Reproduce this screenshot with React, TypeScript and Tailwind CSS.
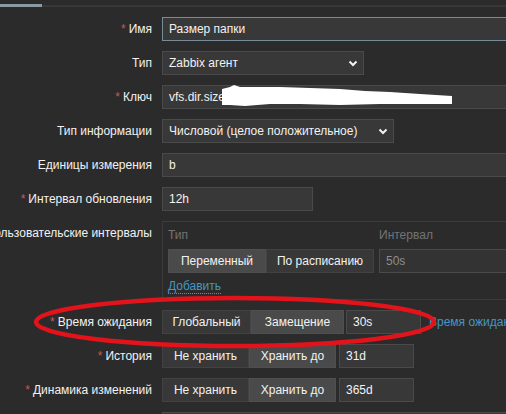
import React from "react";

const font = { fontFamily: '"Liberation Sans", Arial, sans-serif' };

function Label({ text, req }: { text: string; req?: boolean }) {
  return (
    <div className="w-[152px] shrink-0 flex justify-end h-[24px] items-center">
      <span className="whitespace-nowrap shrink-0 text-[12px] text-[#f2f2f2]">
        {req && <span className="text-[#c4585f] mr-[3px]">*</span>}
        {text}
      </span>
    </div>
  );
}

function Input({ value, w, focus, dim }: { value: string; w: string; focus?: boolean; dim?: boolean }) {
  return (
    <div
      className={`${w} h-[24px] shrink-0 border ${focus ? "border-[#768d99]" : "border-[#4a4a4a]"} ${dim ? "bg-[#333333] text-[#8e8e8e]" : "bg-[#383838] text-[#f2f2f2]"} px-[6px] flex items-center text-[12px] whitespace-nowrap`}
    >
      {value}
    </div>
  );
}

function Select({ value, w }: { value: string; w: string }) {
  return (
    <div className={`${w} h-[24px] shrink-0 border border-[#4a4a4a] bg-[#383838] text-[#f2f2f2] pl-[6px] pr-[5px] flex items-center justify-between text-[12px]`}>
      <span>{value}</span>
      <svg width="10" height="7" viewBox="0 0 10 7">
        <polyline points="1.5,1.5 5,5 8.5,1.5" fill="none" stroke="#f2f2f2" strokeWidth="2" />
      </svg>
    </div>
  );
}

function Seg({ label, w, active }: { label: string; w: string; active?: boolean }) {
  return (
    <div
      className={`${w} h-[24px] shrink-0 border ${active ? "bg-[#4a4a4a] border-[#4f4f4f]" : "bg-[#383838] border-[#424242]"} flex items-center justify-center text-[12px] text-[#f2f2f2] whitespace-nowrap`}
    >
      {label}
    </div>
  );
}

function Row({ children }: { children: React.ReactNode }) {
  return <div className="flex items-start gap-[10px]">{children}</div>;
}

export default function App() {
  return (
    <div className="w-[506px] h-[414px] overflow-hidden bg-[#2b2b2b] relative" style={font}>
      {/* top tab line */}
      <div className="pt-[4px] flex items-end">
        <div className="w-[42px] h-[3px] bg-[#8a9ba3]" />
        <div className="flex-1 h-[2px] bg-[#383838]" />
      </div>

      <div className="pt-[10px] flex flex-col gap-[10px]">
        <Row>
          <Label text="Имя" req />
          <Input value="Размер папки" w="w-[453px]" focus />
        </Row>
        <Row>
          <Label text="Тип" />
          <Select value="Zabbix агент" w="w-[202px]" />
        </Row>
        <Row>
          <Label text="Ключ" req />
          <div className="relative">
            <Input value="vfs.dir.size[" w="w-[453px]" />
            <svg className="absolute left-0 top-0" width="340" height="26" viewBox="162 84 340 26" style={{ overflow: "visible" }}>
              <polygon
                fill="#ffffff"
                points="222,88 230,86 234,84 240,86 255,86 280,86 310,87 340,88 365,90 390,91 420,93 452,95 452,103 420,103 380,103 340,104 300,103 270,103 245,105 230,104 222,104"
              />
            </svg>
          </div>
        </Row>
        <Row>
          <Label text="Тип информации" />
          <Select value="Числовой (целое положительное)" w="w-[232px]" />
        </Row>
        <Row>
          <Label text="Единицы измерения" />
          <Input value="b" w="w-[453px]" />
        </Row>
        <Row>
          <Label text="Интервал обновления" req />
          <Input value="12h" w="w-[151px]" />
        </Row>
        <Row>
          <Label text="Пользовательские интервалы" />
          <div className="w-[453px] h-[79px] shrink-0 border border-[#3c3c3c] pl-[5px] pt-[6px]">
            <div className="flex h-[14px] leading-[14px] text-[12px] text-[#737373] mb-[7px]">
              <span className="w-[211px]">Тип</span>
              <span>Интервал</span>
            </div>
            <div className="flex items-center">
              <Seg label="Переменный" w="w-[98px]" active />
              <Seg label="По расписанию" w="w-[108px]" />
              <div className="w-[5px]" />
              <Input value="50s" w="w-[200px]" dim />
            </div>
            <div className="mt-[6px] h-[14px] leading-[14px] text-[12px]">
              <span className="text-[#4796c4] border-b border-dotted border-[#4796c4]">Добавить</span>
            </div>
          </div>
        </Row>
        <Row>
          <Label text="Время ожидания" req />
          <div className="flex items-center">
            <Seg label="Глобальный" w="w-[89px]" />
            <Seg label="Замещение" w="w-[93px]" active />
            <div className="w-[2px]" />
            <Input value="30s" w="w-[75px]" />
            <span className="ml-[8px] text-[12px] text-[#4796c4] whitespace-nowrap">Время ожидания по умолчанию</span>
          </div>
        </Row>
        <Row>
          <Label text="История" req />
          <div className="flex items-center">
            <Seg label="Не хранить" w="w-[87px]" />
            <Seg label="Хранить до" w="w-[87px]" active />
            <div className="w-[3px]" />
            <Input value="31d" w="w-[75px]" />
          </div>
        </Row>
        <Row>
          <Label text="Динамика изменений" req />
          <div className="flex items-center">
            <Seg label="Не хранить" w="w-[87px]" />
            <Seg label="Хранить до" w="w-[87px]" active />
            <div className="w-[3px]" />
            <Input value="365d" w="w-[75px]" />
          </div>
        </Row>
        <Row>
          <div className="w-[152px] shrink-0" />
          <Input value="" w="w-[453px]" />
        </Row>
      </div>

      {/* red hand-drawn ellipse */}
      <svg className="absolute left-0 top-0 pointer-events-none" width="506" height="414">
        <ellipse cx="235" cy="322" rx="199" ry="24" fill="none" stroke="#e3131b" strokeWidth="4.5" />
      </svg>
    </div>
  );
}
